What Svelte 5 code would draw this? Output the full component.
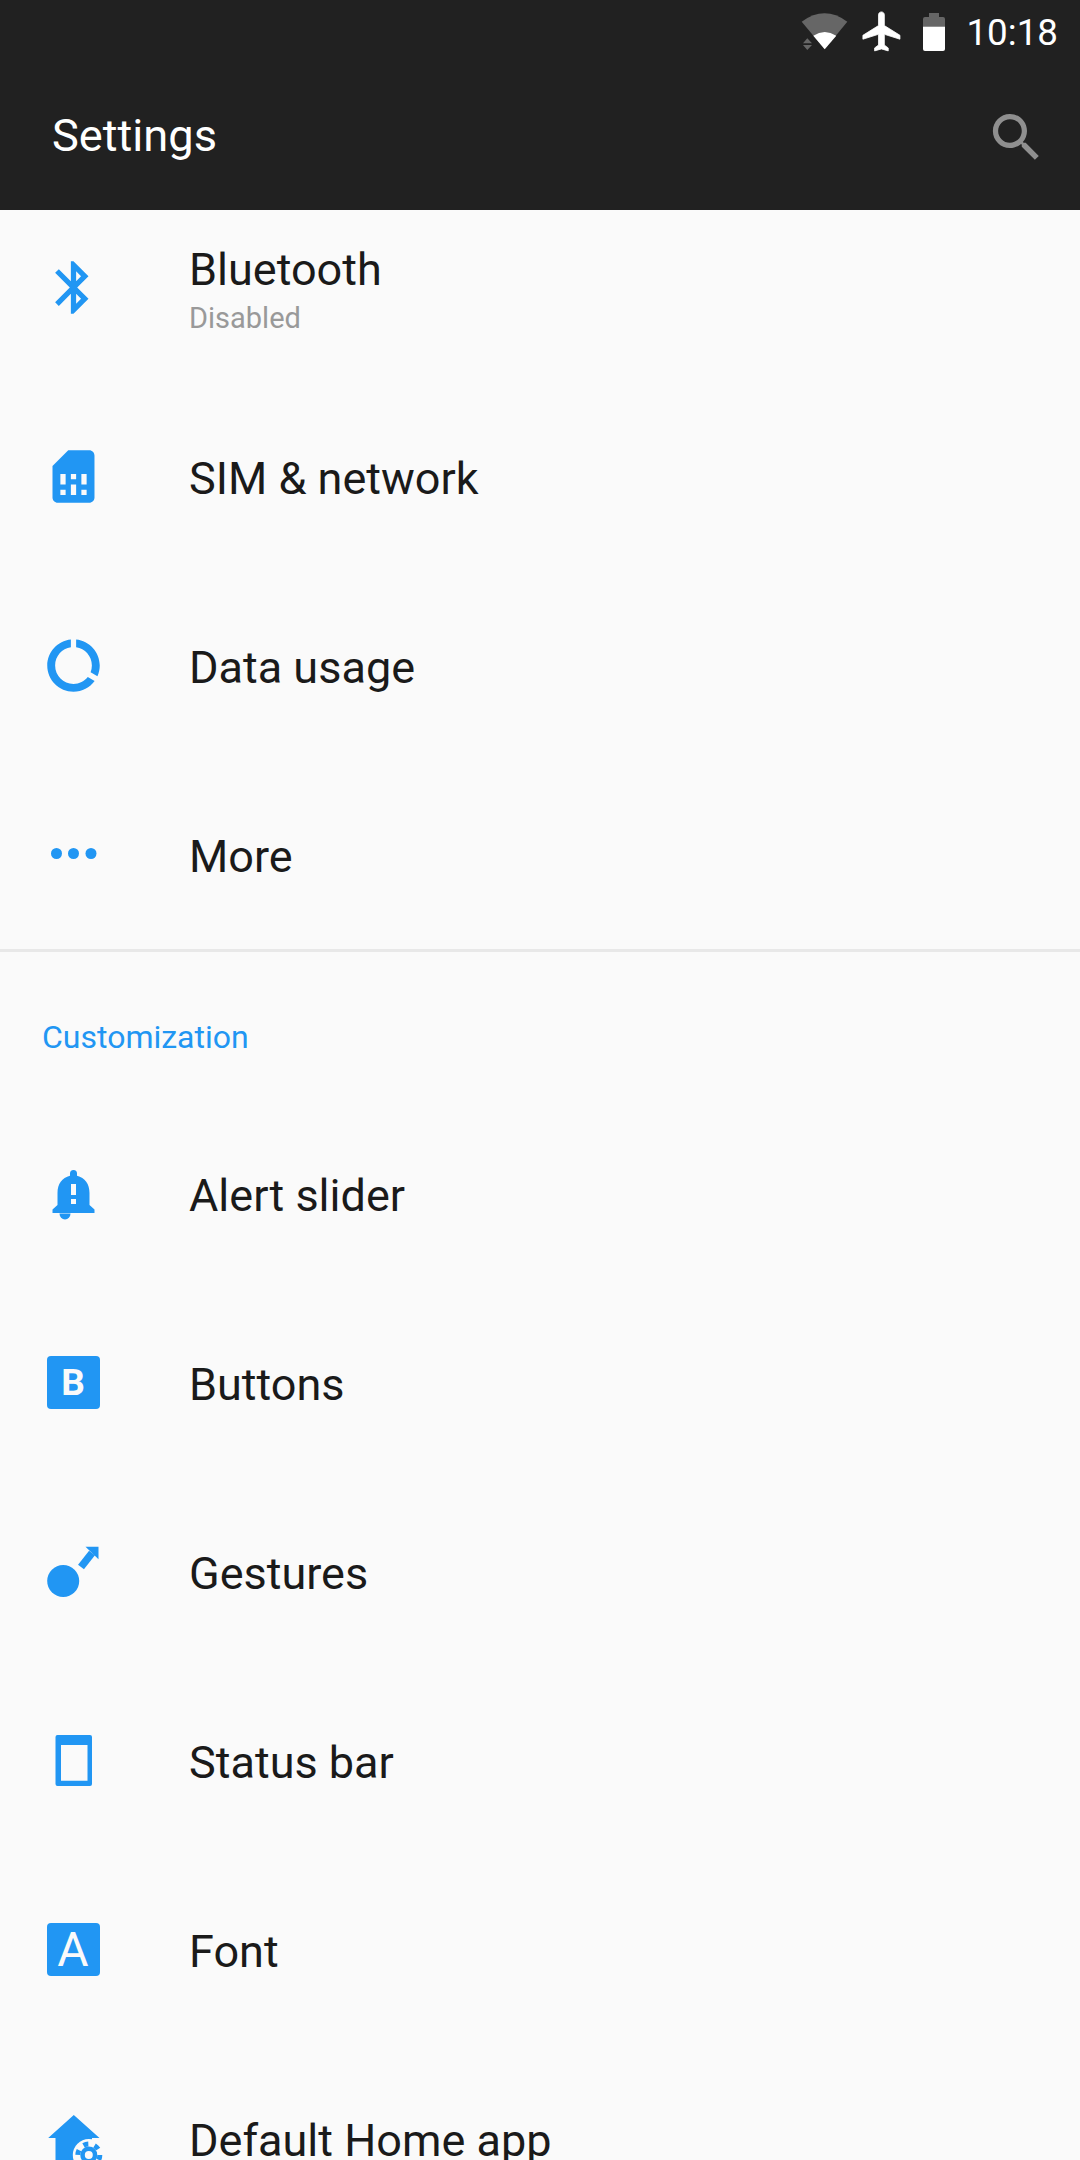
<script>
  const firstGroup = [
    { key: 'bluetooth', title: 'Bluetooth', sub: 'Disabled' },
    { key: 'sim', title: 'SIM & network' },
    { key: 'data', title: 'Data usage' },
    { key: 'more', title: 'More' }
  ];
  const secondGroup = [
    { key: 'alert', title: 'Alert slider' },
    { key: 'buttons', title: 'Buttons' },
    { key: 'gestures', title: 'Gestures' },
    { key: 'statusbar', title: 'Status bar' },
    { key: 'font', title: 'Font' },
    { key: 'home', title: 'Default Home app' }
  ];
  const materialPaths = {
    bluetooth: 'M17.71 7.71L12 2h-1v7.59L6.41 5 5 6.41 10.59 12 5 17.59 6.41 19 11 14.41V22h1l5.71-5.71-4.3-4.29 4.3-4.29zM13 5.83l1.88 1.88L13 9.59V5.83zm1.88 10.46L13 18.17v-3.76l1.88 1.88z',
    sim: 'M19.99 4c0-1.1-.89-2-1.99-2h-8L4 8v12c0 1.1.9 2 2 2h12c1.1 0 2-.9 2-2l-.01-16zM9 19H7v-2h2v2zm8 0h-2v-2h2v2zm-8-4H7v-4h2v4zm4 4h-2v-4h2v4zm0-6h-2v-2h2v2zm4 2h-2v-4h2v4z',
    data: 'M13 2.05v3.03c3.39.49 6 3.39 6 6.92 0 .9-.18 1.75-.48 2.54l2.6 1.53c.56-1.24.88-2.62.88-4.07 0-5.18-3.95-9.45-9-9.95zM12 19c-3.87 0-7-3.13-7-7 0-3.53 2.61-6.43 6-6.92V2.05c-5.06.5-9 4.76-9 9.95 0 5.52 4.47 10 9.99 10 3.31 0 6.24-1.61 8.06-4.09l-2.6-1.53C16.17 17.98 14.21 19 12 19z'
  };
</script>

{#snippet icon(key)}
  {#if materialPaths[key]}
    <svg class="icon" viewBox="0 0 24 24"><path d={materialPaths[key]} /></svg>
  {:else if key === 'more'}
    <svg class="icon" viewBox="0 0 63 63">
      <circle cx="14.5" cy="30.500" r="5.5" />
      <circle cx="31.5" cy="30.500" r="5.5" />
      <circle cx="49" cy="30.500" r="5.5" />
    </svg>
  {:else if key === 'alert'}
    <svg class="icon" viewBox="0 0 63 63">
      <path fill-rule="evenodd" d="M31.5 8a3.5 3.5 0 0 1 3.5 3.5v2.2C43 15.5 47.5 22 47.5 31v12l5 4.6V51h-42v-3.4l5-4.6V31c0-9 4.5-15.5 12.5-17.3v-2.2A3.5 3.5 0 0 1 31.5 8zM29 22v11h5V22zm0 15v5h5v-5z" />
      <path d="M17.5 51.5h11a5.5 6 0 0 1-11 0z" />
    </svg>
  {:else if key === 'buttons'}
    <span class="icon badge bold">B</span>
  {:else if key === 'gestures'}
    <svg class="icon" viewBox="0 0 63 63">
      <circle cx="21.2" cy="41" r="16" />
      <polygon points="43.5,6.7 56.5,6.7 56.5,19.3" />
      <line x1="39" y1="27" x2="50" y2="13" class="shaft" />
    </svg>
  {:else if key === 'statusbar'}
    <svg class="icon" viewBox="0 0 63 63">
      <path fill-rule="evenodd" d="M15.5 6h32.5a2 2 0 0 1 2 2v47a2 2 0 0 1-2 2H15.500a2 2 0 0 1-2-2V8a2 2 0 0 1 2-2zM19 16v35.700h26.500V16z" />
    </svg>
  {:else if key === 'font'}
    <span class="icon badge">A</span>
  {:else if key === 'home'}
    <svg class="icon" viewBox="0 0 63 63">
      <path d="M31.800 8L57.500 31H50V60H13.500V31H6.200z" />
      <circle cx="46.800" cy="48" r="16" class="gap" />
      <circle cx="46.800" cy="48" r="8.500" />
      <circle cx="46.800" cy="48" r="11" class="teeth" />
      <circle cx="46.800" cy="48" r="4" class="gap" />
    </svg>
  {/if}
{/snippet}

{#snippet row(item)}
  <div class="row">
    {@render icon(item.key)}
    <div class="text" class:two={item.sub}>
      <div class="title">{item.title}</div>
      {#if item.sub}<div class="sub">{item.sub}</div>{/if}
    </div>
  </div>
{/snippet}

<div class="screen">
  <header>
    <div class="status">
      <svg class="wifi" viewBox="800 10 52 42">
        <path class="dim" d="M802.700 21.700Q825.500 4.900 848.300 21.700L825.700 49.300z" />
        <path class="bright" d="M814.300 35.700Q825.700 28.400 837.300 35.700L825.700 49.300z" />
        <path class="dim" d="M808.300 38.300L813 43.300H804zM804 45H813L808.300 50z" />
      </svg>
      <svg class="plane" viewBox="0 0 24 24">
        <path class="bright rounded" d="M21 16v-2l-8-5V3.500c0-.83-.67-1.500-1.500-1.500S10 2.670 10 3.500V9l-8 5v2l8-2.500V19l-2 1.500V22l3.500-1 3.500 1v-1.500L13 19v-5.500l8 2.500z" />
      </svg>
      <svg class="battery" viewBox="0 0 22 38">
        <path class="dim" d="M6 0h10v4h4a2 2 0 0 1 2 2v7H0V6a2 2 0 0 1 2-2h4z" />
        <path class="bright" d="M0 13.500h22V36a2 2 0 0 1-2 2H2a2 2 0 0 1-2-2z" />
      </svg>
      <span class="time">10:18</span>
    </div>
    <div class="toolbar">
      <span class="heading">Settings</span>
      <svg class="search" viewBox="0 0 24 24">
        <path d="M15.500 14h-.79l-.28-.27C15.410 12.590 16 11.110 16 9.500 16 5.910 13.090 3 9.500 3S3 5.910 3 9.500 5.910 16 9.500 16c1.610 0 3.090-.59 4.230-1.570l.27.28v.79l5 4.990L20.490 19l-4.990-5zm-6 0C7.010 14 5 11.990 5 9.500S7.010 5 9.500 5 14 7.010 14 9.500 11.990 14 9.500 14z" />
      </svg>
    </div>
  </header>

  <section class="first">
    {#each firstGroup as item}
      {@render row(item)}
    {/each}
  </section>
  <div class="divider"></div>
  <div class="category">Customization</div>
  <section>
    {#each secondGroup as item}
      {@render row(item)}
    {/each}
  </section>
</div>

<style>
  :global(body) {
    margin: 0;
    background: #fafafa;
  }
  .screen {
    width: 1080px;
    height: 2160px;
    overflow: hidden;
    background: #fafafa;
    font-family: Roboto, "Liberation Sans", sans-serif;
  }
  header {
    position: relative;
    z-index: 1;
    height: 210px;
    background: #212121;
  }
  .status {
    height: 64px;
    display: flex;
    align-items: center;
    justify-content: flex-end;
    padding-right: 22px;
    color: #fff;
  }
  .wifi {
    width: 52px;
    height: 42px;
    margin-top: -2px;
  }
  .plane {
    width: 46.8px;
    height: 46.8px;
    margin: -2px 0 0 8px;
  }
  .battery {
    width: 22px;
    height: 38px;
    margin: -1px 0 0 18px;
  }
  .dim {
    fill: #666;
  }
  .bright {
    fill: #fff;
  }
  .rounded {
    stroke: #fff;
    stroke-width: 0.4;
    stroke-linejoin: round;
  }
  .time {
    margin: 2px 0 0 21px;
    font-size: 36.75px;
    line-height: 44px;
  }
  .toolbar {
    height: 146px;
    display: flex;
    align-items: center;
    justify-content: space-between;
    padding: 0 32px 0 52px;
  }
  .heading {
    margin-top: -2px;
    color: #fff;
    font-size: 45.2px;
    line-height: 56px;
  }
  .search {
    width: 63px;
    height: 63px;
    fill: #8f8f8f;
  }
  .first {
    margin-top: -17px;
  }
  .row {
    height: 189px;
    display: flex;
    align-items: center;
    padding-left: 41.5px;
  }
  .icon {
    flex: none;
    width: 63px;
    height: 63px;
    fill: #2196f3;
  }
  .shaft {
    stroke: #2196f3;
    stroke-width: 7.5;
  }
  .gap {
    fill: #fafafa;
  }
  .teeth {
    fill: none;
    stroke: #2196f3;
    stroke-width: 5;
    stroke-dasharray: 5 6.5;
  }
  .badge {
    display: flex;
    align-items: center;
    justify-content: center;
    box-sizing: border-box;
    width: 53px;
    height: 53px;
    margin: 0 5px;
    border-radius: 4px;
    background: #2196f3;
    color: #fafafa;
    font-size: 48px;
    line-height: 53px;
  }
  .badge.bold {
    font-size: 37px;
    font-weight: 700;
  }
  .text {
    margin-left: 84.5px;
    padding-top: 4px;
  }
  .text.two {
    padding-top: 6px;
  }
  .title {
    color: #1a1a1a;
    font-size: 45px;
    line-height: 52px;
  }
  .sub {
    margin-top: 3px;
    color: #999;
    font-size: 29px;
    line-height: 38px;
  }
  .divider {
    height: 3px;
    background: #e8e8e8;
  }
  .category {
    height: 147px;
    box-sizing: border-box;
    padding: 65px 0 0 42px;
    color: #2196f3;
    font-size: 32px;
    line-height: 40px;
  }
</style>
